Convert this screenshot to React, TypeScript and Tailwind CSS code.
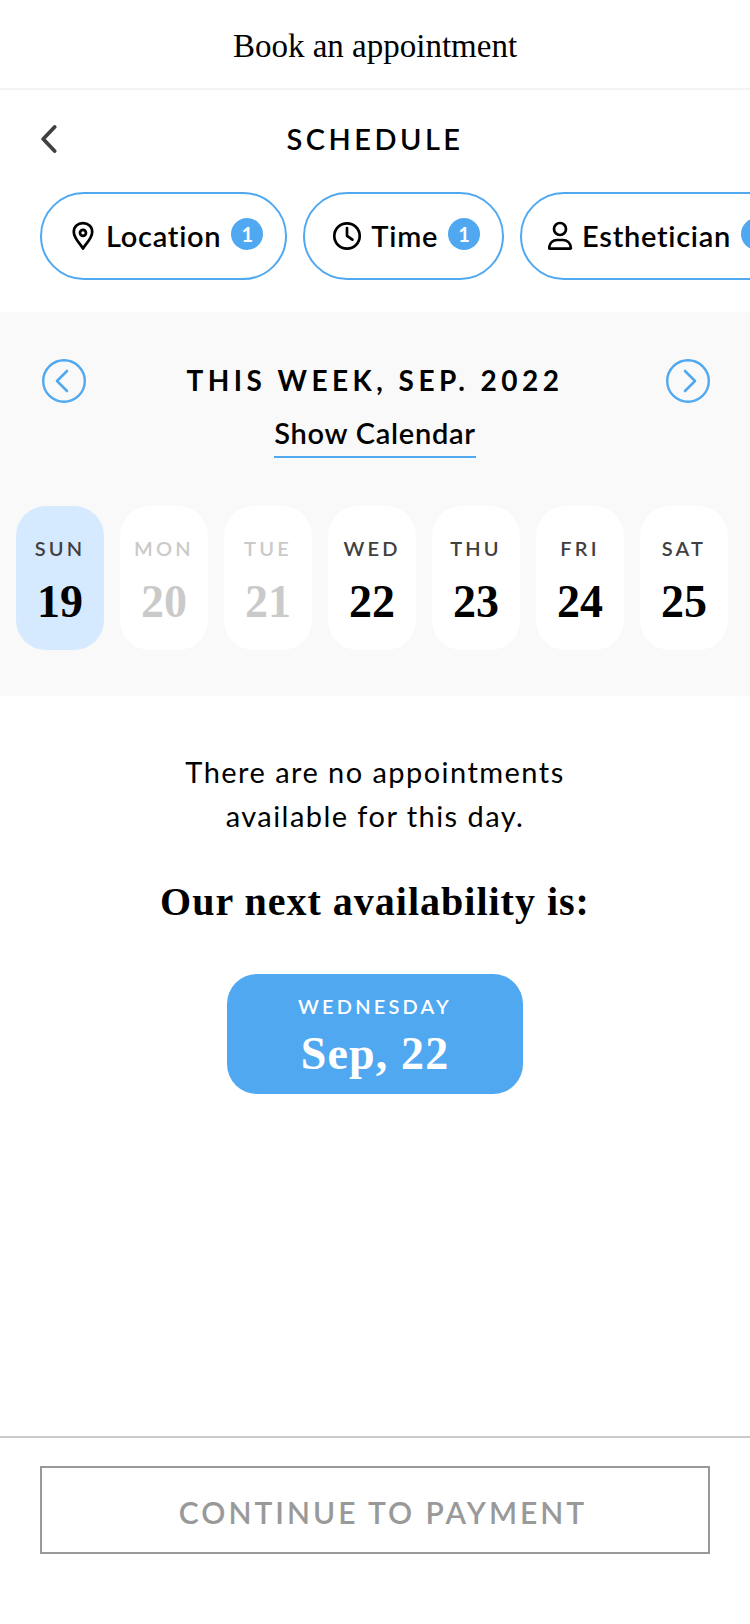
import { useState } from "react";
import type { ReactNode } from "react";

type Filter = {
  label: string;
  count: number;
  icon: ReactNode;
};

type Day = {
  name: string;
  date: number;
  disabled?: boolean;
};

const PinIcon = () => (
  <svg width="30" height="30" viewBox="-4 0 30 30" fill="none" stroke="currentColor" aria-hidden="true">
    <path
      d="M11 27.5C8 22.5 1.8 17 1.8 10.9C1.8 5.6 5.8 2.2 11 2.2S20.2 5.6 20.2 10.9C20.2 17 14 22.5 11 27.5Z"
      strokeWidth="2.7"
      strokeLinejoin="round"
    />
    <circle cx="11" cy="11.8" r="3" strokeWidth="2.7" />
  </svg>
);

const ClockIcon = () => (
  <svg width="32" height="30" viewBox="-1 0 32 30" fill="none" stroke="currentColor" aria-hidden="true">
    <circle cx="15" cy="15" r="12.7" strokeWidth="2.7" />
    <path d="M15 7V14.8L20.4 18.6" strokeWidth="2.7" strokeLinecap="round" strokeLinejoin="round" />
  </svg>
);

const PersonIcon = () => (
  <svg width="26" height="30" viewBox="1 0 26 30" fill="none" stroke="currentColor" aria-hidden="true">
    <circle cx="13" cy="8" r="6" strokeWidth="2.7" />
    <path
      d="M2.9 27.7C2.4 27.7 2 27.3 2.1 26.7C2.7 21.8 6.2 19 10 19H16C19.8 19 23.3 21.8 23.9 26.7C24 27.3 23.6 27.7 23.1 27.7Z"
      strokeWidth="2.7"
      strokeLinejoin="round"
    />
  </svg>
);

const filters: Filter[] = [
  { label: "Location", count: 1, icon: <PinIcon /> },
  { label: "Time", count: 1, icon: <ClockIcon /> },
  { label: "Esthetician", count: 1, icon: <PersonIcon /> },
];

const days: Day[] = [
  { name: "SUN", date: 19 },
  { name: "MON", date: 20, disabled: true },
  { name: "TUE", date: 21, disabled: true },
  { name: "WED", date: 22 },
  { name: "THU", date: 23 },
  { name: "FRI", date: 24 },
  { name: "SAT", date: 25 },
];

const App = () => {
  const [selected, setSelected] = useState(19);

  return (
    <div className="flex min-h-screen flex-col bg-white font-[Lato,sans-serif] text-black">
      <header className="flex h-[90px] items-center justify-center border-b-2 border-[#f4f4f4] pt-1">
        <h1 className="font-['Liberation_Serif',serif] text-[33px] leading-10">Book an appointment</h1>
      </header>

      <div className="grid h-[102px] grid-cols-[40px_1fr_40px] items-center px-10 pb-1">
        <button aria-label="Back" className="text-[#404040]">
          <svg width="17" height="30" viewBox="0 0 17 30" fill="none" stroke="currentColor" aria-hidden="true">
            <path d="M14.6 3L3.2 15L14.6 27" strokeWidth="3.8" strokeLinecap="round" strokeLinejoin="round" />
          </svg>
        </button>
        <h2 className="text-center text-[29px] leading-9 font-semibold tracking-[0.12em]">SCHEDULE</h2>
      </div>

      {/* filters */}
      <div className="flex gap-4 overflow-x-auto px-10 pb-8 [scrollbar-width:none]">
        {filters.map((f) => (
          <button
            key={f.label}
            className="flex h-22 shrink-0 items-center gap-2 rounded-full border-2 border-[#50a8f1] pr-[22px] pl-[26px]"
          >
            {f.icon}
            <span className="text-[29px] leading-9 font-semibold tracking-wide">{f.label}</span>
            <span className="mb-1 ml-0.5 flex size-8 items-center justify-center rounded-full bg-[#50a8f1] text-xl leading-8 font-bold text-white">
              {f.count}
            </span>
          </button>
        ))}
      </div>

      {/* week picker */}
      <section className="bg-[#f9f9f9] pt-[46px] pb-[46px]">
        <div className="flex items-start justify-between px-10">
          <button aria-label="Previous week" className="text-[#50a8f1]">
            <svg width="46" height="46" viewBox="-2 -1 46 46" fill="none" stroke="currentColor" aria-hidden="true">
              <circle cx="22" cy="22" r="20.8" strokeWidth="2.4" />
              <path d="M25 12L15 22L25 32" strokeWidth="2.6" strokeLinecap="round" strokeLinejoin="round" />
            </svg>
          </button>
          <div className="flex flex-col items-center gap-3">
            <h3 className="text-[28px] leading-[44px] font-bold tracking-[0.16em]">THIS WEEK, SEP. 2022</h3>
            <button className="border-b-2 border-[#50a8f1] pb-1 text-[29px] leading-[38px] font-semibold tracking-wide">
              Show Calendar
            </button>
          </div>
          <button aria-label="Next week" className="text-[#50a8f1]">
            <svg width="46" height="46" viewBox="-2 -1 46 46" fill="none" stroke="currentColor" aria-hidden="true">
              <circle cx="22" cy="22" r="20.8" strokeWidth="2.4" />
              <path d="M19 12L29 22L19 32" strokeWidth="2.6" strokeLinecap="round" strokeLinejoin="round" />
            </svg>
          </button>
        </div>

        <div className="mt-12 grid grid-cols-7 gap-4 pr-[22px] pl-4">
          {days.map((d) => (
            <button
              key={d.name}
              disabled={d.disabled}
              onClick={() => setSelected(d.date)}
              className={`flex h-36 flex-col items-center rounded-[30px] pt-[26px] ${
                selected === d.date ? "bg-[#d6eaff]" : "bg-white"
              }`}
            >
              <span
                className={`text-xl leading-8 font-semibold tracking-[0.16em] ${
                  d.disabled ? "text-[#cacaca]" : "text-[#404040]"
                }`}
              >
                {d.name}
              </span>
              <span
                className={`pt-3 font-['Liberation_Serif',serif] text-[46px] leading-[52px] font-bold ${
                  d.disabled ? "text-[#cacaca]" : "text-black"
                }`}
              >
                {d.date}
              </span>
            </button>
          ))}
        </div>
      </section>

      <main className="flex flex-1 flex-col items-center pt-[54px] text-center">
        <p className="text-[29px] leading-[44px] tracking-wider">
          There are no appointments
          <br />
          available for this day.
        </p>
        <h3 className="mt-8 font-['Liberation_Serif',serif] text-[40px] leading-16 font-bold tracking-wide">
          Our next availability is:
        </h3>
        <button className="mt-10 flex h-30 w-74 flex-col items-center rounded-[30px] bg-[#50a8f1] pt-4 text-white">
          <span className="text-xl leading-8 font-semibold tracking-[0.16em]">WEDNESDAY</span>
          <span className="font-['Liberation_Serif',serif] text-[46px] leading-16 font-bold tracking-wide">
            Sep, 22
          </span>
        </button>
      </main>

      <footer className="border-t-2 border-[#cacaca] px-10 pt-7 pb-[70px]">
        <button
          disabled
          className="h-22 w-full border-2 border-[#999999] pt-1 pl-4 text-[30px] font-semibold tracking-widest text-[#999999]"
        >
          CONTINUE TO PAYMENT
        </button>
      </footer>
    </div>
  );
};

export default App;
